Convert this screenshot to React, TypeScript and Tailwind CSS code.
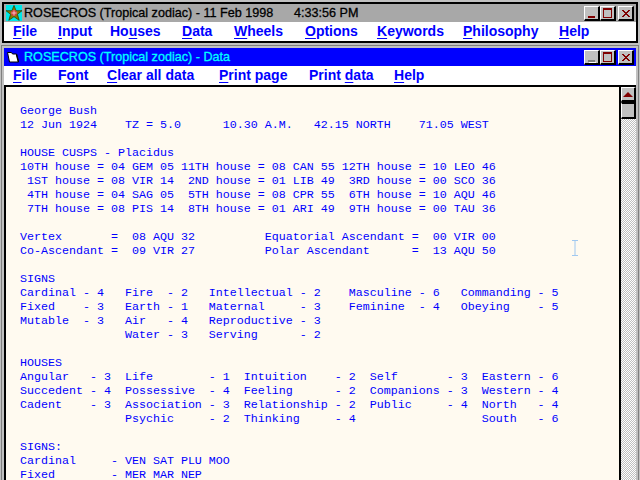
const lines = `George Bush
12 Jun 1924    TZ = 5.0      10.30 A.M.   42.15 NORTH    71.05 WEST

HOUSE CUSPS - Placidus
10TH house = 04 GEM 05 11TH house = 08 CAN 55 12TH house = 10 LEO 46
 1ST house = 08 VIR 14  2ND house = 01 LIB 49  3RD house = 00 SCO 36
 4TH house = 04 SAG 05  5TH house = 08 CPR 55  6TH house = 10 AQU 46
 7TH house = 08 PIS 14  8TH house = 01 ARI 49  9TH house = 00 TAU 36

Vertex       =  08 AQU 32          Equatorial Ascendant =  00 VIR 00
Co-Ascendant =  09 VIR 27          Polar Ascendant      =  13 AQU 50

SIGNS
Cardinal - 4   Fire  - 2   Intellectual - 2    Masculine - 6   Commanding - 5
Fixed    - 3   Earth - 1   Maternal     - 3    Feminine  - 4   Obeying    - 5
Mutable  - 3   Air   - 4   Reproductive - 3
               Water - 3   Serving      - 2

HOUSES
Angular   - 3  Life        - 1  Intuition    - 2  Self       - 3  Eastern - 6
Succedent - 4  Possessive  - 4  Feeling      - 2  Companions - 3  Western - 4
Cadent    - 3  Association - 3  Relationship - 2  Public     - 4  North   - 4
               Psychic     - 2  Thinking     - 4                  South   - 6

SIGNS:
Cardinal     - VEN SAT PLU MOO
Fixed        - MER MAR NEP`;

type Item = { pre: string; u: string; post: string; w: string };

const mainMenu: Item[] = [
  { pre: "", u: "F", post: "ile", w: "w-[45px]" },
  { pre: "", u: "I", post: "nput", w: "w-[52px]" },
  { pre: "Ho", u: "u", post: "ses", w: "w-[72px]" },
  { pre: "", u: "D", post: "ata", w: "w-[52px]" },
  { pre: "", u: "W", post: "heels", w: "w-[71px]" },
  { pre: "", u: "O", post: "ptions", w: "w-[72px]" },
  { pre: "", u: "K", post: "eywords", w: "w-[86px]" },
  { pre: "", u: "P", post: "hilosophy", w: "w-[96px]" },
  { pre: "", u: "H", post: "elp", w: "w-[40px]" },
];

const dataMenu: Item[] = [
  { pre: "", u: "F", post: "ile", w: "w-[45px]" },
  { pre: "F", u: "o", post: "nt", w: "w-[49px]" },
  { pre: "", u: "C", post: "lear all data", w: "w-[112px]" },
  { pre: "", u: "P", post: "rint page", w: "w-[90px]" },
  { pre: "Print ", u: "d", post: "ata", w: "w-[85px]" },
  { pre: "", u: "H", post: "elp", w: "w-[40px]" },
];

function Menu({ items }: { items: Item[] }) {
  return (
    <div className="flex h-[19px] items-center bg-white pl-[9px] text-[14px] font-bold leading-[19px] text-[#0000ff] [font-family:'Liberation_Sans',sans-serif]">
      {items.map((m) => (
        <span key={m.u + m.post} className={`${m.w} shrink-0 whitespace-pre`}>
          {m.pre}
          <span className="underline underline-offset-2">{m.u}</span>
          {m.post}
        </span>
      ))}
    </div>
  );
}

function Btn({ kind, dim }: { kind: "min" | "max" | "close"; dim?: boolean }) {
  return (
    <div className="h-[15px] w-[16px] shrink-0 border-t border-l border-r-2 border-b-2 border-t-white border-l-white border-r-black border-b-black bg-[#c0c0c0]">
      <svg width="13" height="12" viewBox="0 0 13 12" className="block" shapeRendering="crispEdges">
        {kind === "min" && (
          <>
            <rect x="3" y="9" width="7" height="2" fill={dim ? "#808080" : "#800000"} />
            {dim && <rect x="4" y="11" width="7" height="1" fill="#ffffff" />}
          </>
        )}
        {kind === "max" && (
          <>
            <rect x="2.5" y="1.5" width="8" height="9" fill="none" stroke="#800000" />
            <rect x="2" y="1" width="9" height="2" fill="#800000" />
          </>
        )}
        {kind === "close" && (
          <path d="M3 3l7 7M4 3l7 7M10 3l-7 7M11 3l-7 7" stroke="#800000" fill="none" shapeRendering="auto" />
        )}
      </svg>
    </div>
  );
}

function Buttons({ dim }: { dim?: boolean }) {
  return (
    <div className="flex items-center pr-[2px]">
      <Btn kind="min" dim={dim} />
      <Btn kind="max" />
      <div className="w-[2px]" />
      <Btn kind="close" />
    </div>
  );
}

function Star() {
  return (
    <svg width="16" height="16" viewBox="0 0 16 16" className="shrink-0">
      <rect width="16" height="16" fill="#00e8e8" />
      <path d="M8 0.5l2.1 5.2H16l-4.6 3.6 1.8 6-5.2-3.6-5.2 3.6 1.8-6L0 5.7h5.9z" fill="#808000" stroke="#303000" strokeWidth="0.7" />
      <circle cx="8" cy="8" r="3" fill="#d04040" />
      <path d="M8 5.5v5M5.5 8h5" stroke="#ffd8d8" strokeWidth="0.8" />
    </svg>
  );
}

function DocIcon() {
  return (
    <svg width="12" height="11" viewBox="0 0 12 11" className="shrink-0">
      <path d="M0.5 0.5h4l1 1.5h4l2 8h-9z" fill="#ffffff" stroke="#000000" />
      <path d="M9.5 2.5l2 7.5" stroke="#000000" strokeWidth="1.4" />
    </svg>
  );
}

export default function App() {
  return (
    <div className="flex h-[480px] w-[640px] flex-col overflow-hidden bg-[#c0c0c0]">
      <div className="mx-[2px] mt-[2px] h-[41px] shrink-0 border-2 border-black bg-[#c0c0c0]">
        <div className="flex h-[18px] items-center bg-[#a8a8a8] pl-[2px] text-[12.6px] text-black [font-family:'Liberation_Sans',sans-serif]">
          <Star />
          <span className="ml-[2px] w-[270px] shrink-0 whitespace-pre [-webkit-text-stroke:0.3px_black]">ROSECROS (Tropical zodiac) - 11 Feb 1998</span>
          <span className="whitespace-pre [-webkit-text-stroke:0.3px_black]">4:33:56 PM</span>
          <div className="flex-1" />
          <Buttons />
        </div>
        <Menu items={mainMenu} />
      </div>
      <div className="mx-[1px] mt-[2px] flex min-h-0 flex-1 flex-col border-x border-t border-[#808080] px-[2px] pt-[2px]">
        <div className="flex h-[18px] shrink-0 items-center bg-[#0000ff] pl-[3px] text-[12.6px] text-[#00ffff] [font-family:'Liberation_Sans',sans-serif]">
          <DocIcon />
          <span className="ml-[5px] whitespace-pre [-webkit-text-stroke:0.3px_#00ffff]">ROSECROS (Tropical zodiac) - Data</span>
          <div className="flex-1" />
          <Buttons dim />
        </div>
        <Menu items={dataMenu} />
        <div className="flex min-h-0 flex-1 border-t-2 border-l-2 border-black">
          <div className="relative min-w-0 flex-1 overflow-hidden bg-[#fffaf0] pl-[14px] pt-[17px]">
            <pre className="text-[11.67px] leading-[14px] text-[#0000ff] [font-family:'Liberation_Mono',monospace]">{lines}</pre>
            <svg width="8" height="16" viewBox="0 0 8 16" className="absolute left-[565px] top-[153px]">
              <path d="M1 0.5h6M4 0.5v15M1 15.5h6" stroke="#a0c8f0" fill="none" />
            </svg>
          </div>
          <div className="flex w-[17px] shrink-0 flex-col border-l-2 border-black bg-[repeating-conic-gradient(#c0c0c0_0%_25%,#ffffff_0%_50%)] bg-[length:2px_2px]">
            <div className="flex h-[15px] items-center justify-center border-t border-l border-r-2 border-b-2 border-t-white border-l-white border-r-black border-b-black bg-[#c0c0c0]">
              <div className="h-0 w-0 border-x-[5px] border-b-[5px] border-x-transparent border-b-[#800000]" />
            </div>
            <div className="h-[17px] border-t-2 border-t-black border-l border-r-2 border-b-2 border-l-white border-r-black border-b-black bg-[#c0c0c0]" />
          </div>
        </div>
      </div>
    </div>
  );
}
